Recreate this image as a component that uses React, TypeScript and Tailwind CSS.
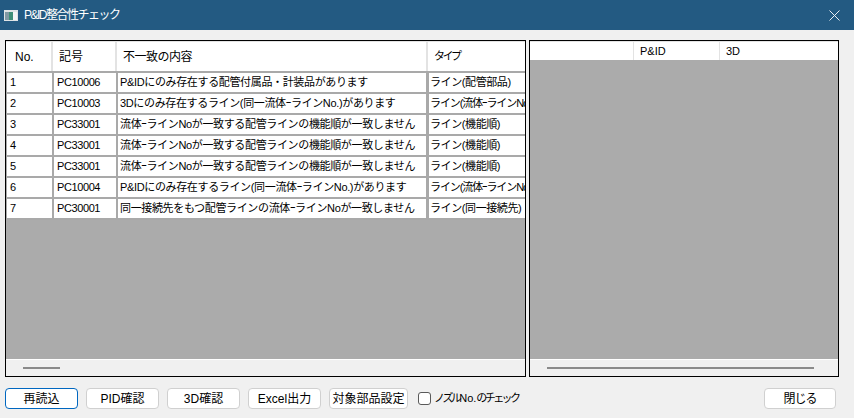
const font = { fontFamily: '"Liberation Sans", "Noto Sans CJK JP", sans-serif' };

const rows = [
  ["1", "PC10006", "P&IDにのみ存在する配管付属品・計装品があります", "ライン(配管部品)"],
  ["2", "PC10003", "3Dにのみ存在するライン(同一流体ｰラインNo.)があります", "ライン(流体ｰラインNo.)"],
  ["3", "PC33001", "流体ｰラインNoが一致する配管ラインの機能順が一致しません", "ライン(機能順)"],
  ["4", "PC33001", "流体ｰラインNoが一致する配管ラインの機能順が一致しません", "ライン(機能順)"],
  ["5", "PC33001", "流体ｰラインNoが一致する配管ラインの機能順が一致しません", "ライン(機能順)"],
  ["6", "PC10004", "P&IDにのみ存在するライン(同一流体ｰラインNo.)があります", "ライン(流体ｰラインNo.)"],
  ["7", "PC30001", "同一接続先をもつ配管ラインの流体ｰラインNoが一致しません", "ライン(同一接続先)"],
];

const cols = "grid grid-cols-[47px_64px_311px_97px]";

function Button({ label, width, active, tight }: { label: string; width: string; active?: boolean; tight?: boolean }) {
  return (
    <button
      className={`${width} h-[21px] shrink-0 rounded-[4px] border bg-white text-[12px] leading-none text-black ${
        active ? "border-[#0067c0]" : "border-[#d0d0d0]"
      } ${tight ? "tracking-[-1px]" : ""}`}
    >
      {label}
    </button>
  );
}

export default function App() {
  return (
    <div className="flex h-[418px] w-[854px] flex-col overflow-hidden bg-[#f0f0f0]" style={font}>
      <div className="flex h-[30px] shrink-0 items-center bg-[#235a82] pl-[3px] pr-[14px] text-[12px] text-white">
        <svg width="14" height="11" viewBox="0 0 14 11" className="ml-[1px] mr-[6px]">
          <rect x="0" y="0" width="14" height="11" fill="#dfe4e6" />
          <rect x="1" y="2" width="4" height="8" fill="#7f98a3" />
          <rect x="5" y="2" width="4" height="8" fill="#3f8f78" />
          <rect x="9" y="2" width="4" height="8" fill="#f4f6f6" />
        </svg>
        <span className="tracking-[-1.5px]">P&amp;ID整合性チェック</span>
        <svg width="11" height="11" viewBox="0 0 11 11" className="ml-auto" stroke="#e8eef3" fill="none">
          <path d="M0.5 0.5 L10.5 10.5 M10.5 0.5 L0.5 10.5" />
        </svg>
      </div>

      <div className="flex gap-[3px] pl-[5px] pt-[10px]">
        <div className="flex h-[337px] w-[521px] flex-col border border-black bg-[#ababab]">
          <div className="flex-1 overflow-hidden">
            <div className={`${cols} h-[32px] border-t border-b-2 border-t-[#e3e3e3] border-b-[#a9a9a9] bg-white text-[12px] text-black`}>
              <div className="flex items-center border-r-2 border-[#e3e3e3] pl-[9px]">No.</div>
              <div className="flex items-center border-r-2 border-[#e3e3e3] pl-[6px]">記号</div>
              <div className="flex items-center border-r-2 border-[#e3e3e3] pl-[6px] tracking-[-0.5px]">不一致の内容</div>
              <div className="flex items-center pl-[6px] text-[11px] tracking-[-2.5px]">タイプ</div>
            </div>
            {rows.map((row) => (
              <div key={row[0]} className={`${cols} h-[21px] border-b-2 border-l border-[#a9a9a9] bg-white text-[11px] text-black`}>
                <div className="flex items-center border-r-2 border-[#a9a9a9] pl-[3px]">{row[0]}</div>
                <div className="flex items-center border-r-2 border-[#a9a9a9] pl-[3px] tracking-[-0.4px]">{row[1]}</div>
                <div className="flex items-center overflow-hidden whitespace-nowrap border-r-[3px] border-[#a9a9a9] pl-[2px] tracking-[-0.35px]">{row[2]}</div>
                <div className={`flex items-center overflow-hidden whitespace-nowrap pl-[1px] ${row[3].includes("流体") ? "tracking-[-1.1px]" : "tracking-[-0.4px]"}`}>{row[3]}</div>
              </div>
            ))}
          </div>
          <div className="flex h-[17px] shrink-0 items-center border-t border-white bg-[#f0f0f0] pl-[17px]">
            <div className="h-[2px] w-[37px] bg-[#8a8a8a]" />
          </div>
        </div>

        <div className="flex h-[337px] w-[310px] flex-col border border-black bg-[#ababab]">
          <div className="flex-1 overflow-hidden">
            <div className="grid h-[19px] grid-cols-[104px_86px_1fr] border-t border-[#e3e3e3] bg-white text-[11px] text-black">
              <div className="border-r border-[#e3e3e3]" />
              <div className="flex items-center border-r border-[#e3e3e3] pl-[6px]">P&amp;ID</div>
              <div className="flex items-center pl-[6px]">3D</div>
            </div>
          </div>
          <div className="flex h-[17px] shrink-0 items-center border-t border-white bg-[#f0f0f0] pl-[17px]">
            <div className="h-[2px] w-[267px] bg-[#8a8a8a]" />
          </div>
        </div>
      </div>

      <div className="flex items-center pl-[5px] pt-[11px]">
        <Button label="再読込" width="w-[73px]" active />
        <Button label="PID確認" width="w-[73px] ml-[8px]" />
        <Button label="3D確認" width="w-[73px] ml-[8px]" />
        <Button label="Excel出力" width="w-[73px] ml-[8px]" />
        <Button label="対象部品設定" width="w-[79px] ml-[8px]" />
        <div className="ml-[10px] h-[13px] w-[13px] rounded-[3px] border border-[#5a5a5a] bg-white" />
        <span className="ml-[3px] text-[11px] tracking-[-2.6px] text-black">
          ノズル<span className="tracking-normal">No.</span>のチェック
        </span>
        <Button label="閉じる" width="w-[72px] ml-auto mr-[18px]" tight />
      </div>
    </div>
  );
}
